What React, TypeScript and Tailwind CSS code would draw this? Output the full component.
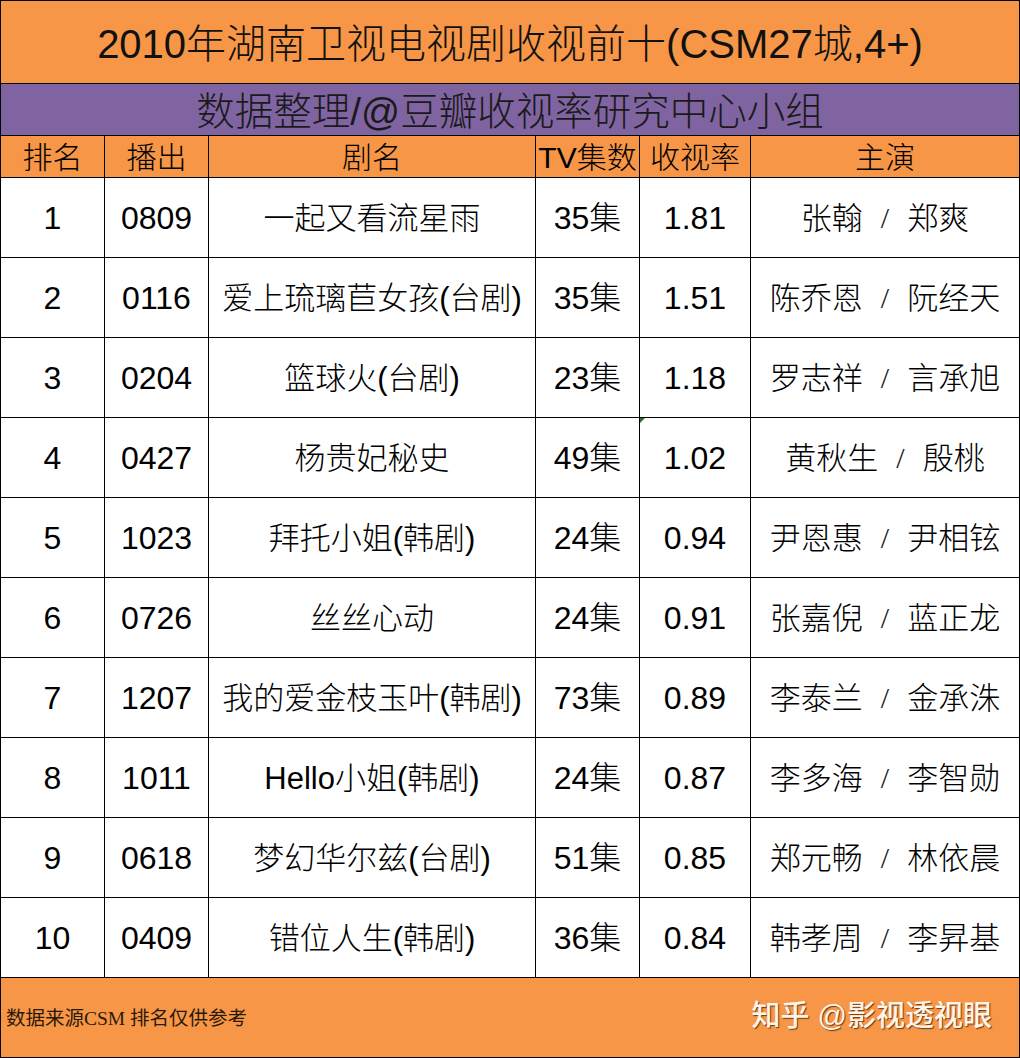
import React from "react";

const rows = [
  ["1", "0809", "一起又看流星雨", "35集", "1.81", "张翰", "郑爽"],
  ["2", "0116", "爱上琉璃苣女孩(台剧)", "35集", "1.51", "陈乔恩", "阮经天"],
  ["3", "0204", "篮球火(台剧)", "23集", "1.18", "罗志祥", "言承旭"],
  ["4", "0427", "杨贵妃秘史", "49集", "1.02", "黄秋生", "殷桃"],
  ["5", "1023", "拜托小姐(韩剧)", "24集", "0.94", "尹恩惠", "尹相铉"],
  ["6", "0726", "丝丝心动", "24集", "0.91", "张嘉倪", "蓝正龙"],
  ["7", "1207", "我的爱金枝玉叶(韩剧)", "73集", "0.89", "李泰兰", "金承洙"],
  ["8", "1011", "Hello小姐(韩剧)", "24集", "0.87", "李多海", "李智勋"],
  ["9", "0618", "梦幻华尔兹(台剧)", "51集", "0.85", "郑元畅", "林依晨"],
  ["10", "0409", "错位人生(韩剧)", "36集", "0.84", "韩孝周", "李昇基"],
];

const font = "font-['Liberation_Sans','Noto_Sans_CJK_SC',sans-serif]";
const cols = "grid grid-cols-[104px_104px_327px_104px_111px_268px]";

export default function App() {
  return (
    <div className={`w-[1020px] h-[1058px] bg-white text-black ${font} font-light`}>
      <div className="w-[1020px] border-x border-black">
        {/* Title */}
        <div className="h-[84px] border-y border-black bg-[#F79646] flex items-center justify-center">
          <span className="text-[40px] leading-none text-[#111] pt-[4px]">
            2010年湖南卫视电视剧收视前十(CSM27城,4+)
          </span>
        </div>
        {/* Subtitle */}
        <div className="h-[52px] border-b border-black bg-[#8064A2] flex items-center justify-center">
          <span className="text-[38.5px] leading-none text-[#1a1a1a] pt-[6px]">
            数据整理/@豆瓣收视率研究中心小组
          </span>
        </div>
        {/* Header */}
        <div className={`${cols} h-[42px] border-b border-black bg-[#F79646]`}>
          {["排名", "播出", "剧名", "TV集数", "收视率", "主演"].map((h, i) => (
            <div
              key={h}
              className={`flex items-center justify-center overflow-hidden whitespace-nowrap text-[30px] leading-none pt-[2px] ${
                i < 5 ? "border-r border-black" : ""
              }`}
            >
              {h}
            </div>
          ))}
        </div>
        {/* Rows */}
        {rows.map((r) => (
          <div key={r[0]} className={`${cols} h-[80px] border-b border-black bg-white`}>
            {r.slice(0, 5).map((c, i) => (
              <div
                key={i}
                className={`relative flex items-center justify-center whitespace-nowrap border-r border-black leading-none pt-[1px] ${
                  i === 2 ? "text-[31px]" : "text-[32px]"
                }`}
              >
                {i === 4 && r[0] === "4" && (
                  <span className="absolute left-0 top-0 w-0 h-0 border-t-[5px] border-r-[5px] border-t-[#2f6b2f] border-r-transparent" />
                )}
                {c}
              </div>
            ))}
            <div className="flex items-center justify-center whitespace-nowrap text-[31px] leading-none pt-[1px]">
              <span>{r[5]}</span>
              <span className="mx-[18px] font-['Liberation_Serif',serif] text-[30px] text-[#222]">/</span>
              <span>{r[6]}</span>
            </div>
          </div>
        ))}
        {/* Footer */}
        <div className="h-[80px] border-b border-black bg-[#F79646] flex items-center justify-between pl-[5px] pr-[27px]">
          <span className="text-[19.5px] leading-none text-[#2a1a0a] font-normal font-['Liberation_Serif','Noto_Sans_CJK_SC',serif] pt-[3px]">
            数据来源CSM 排名仅供参考
          </span>
          <span className="text-[29px] leading-none text-[#fdf5ea] font-medium [text-shadow:1px_1px_1px_rgba(60,30,0,0.75)] pb-[2px]">
            知乎 @影视透视眼
          </span>
        </div>
      </div>
    </div>
  );
}
